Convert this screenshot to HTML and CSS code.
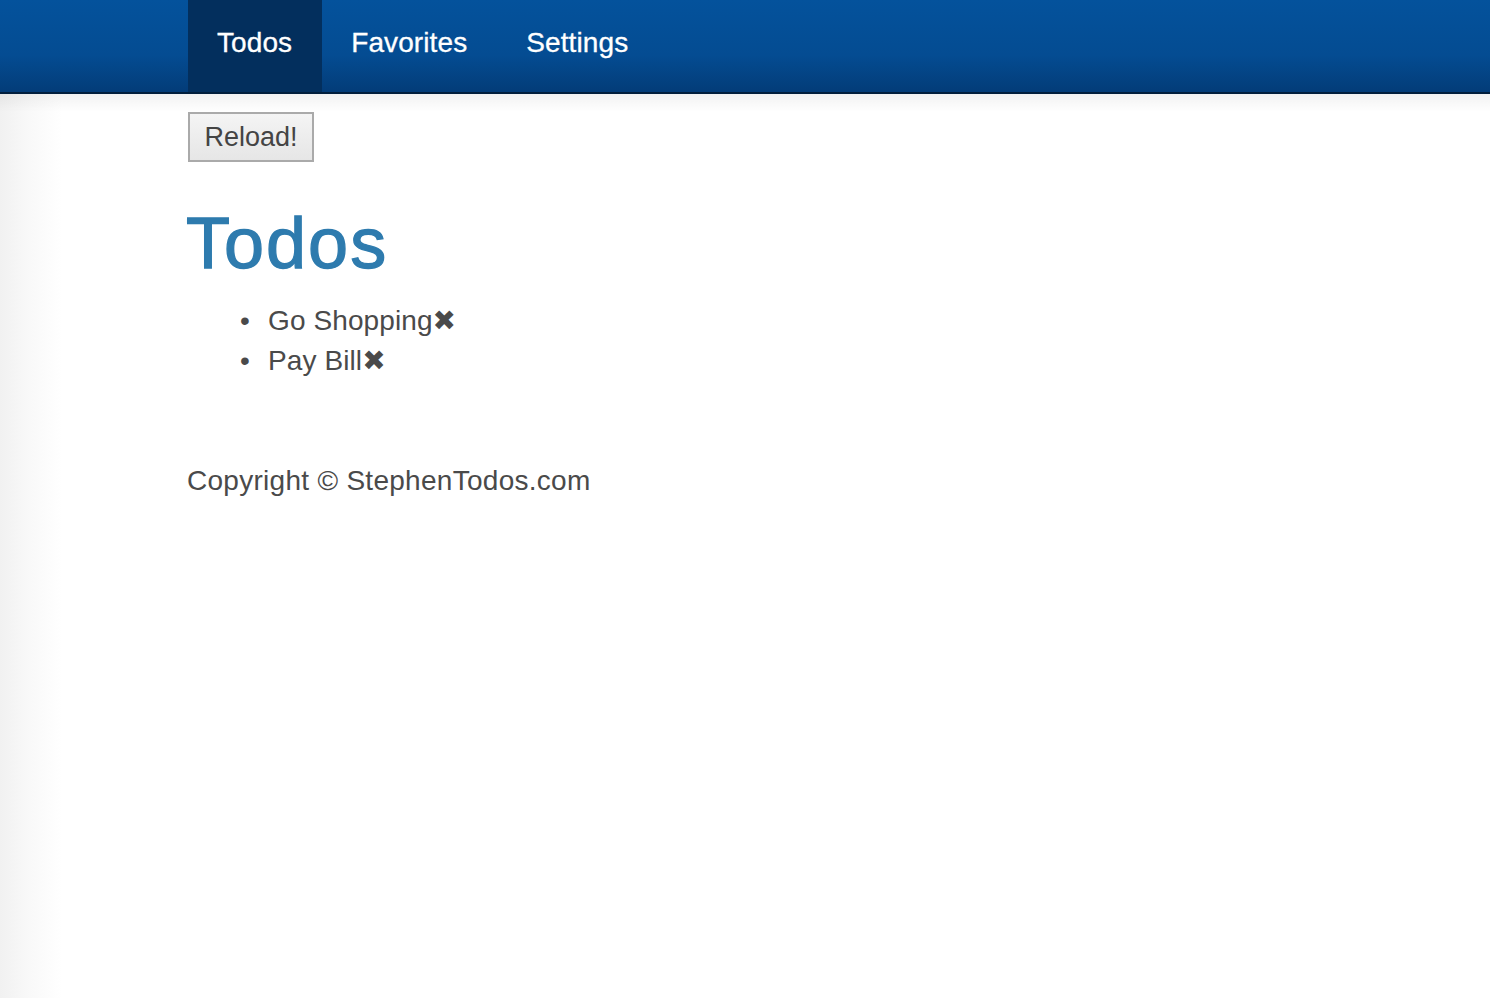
FILE: index.html
```html
<!DOCTYPE html>
<html>
<head>
<meta charset="utf-8">
<link rel="stylesheet" href="styles.css">
</head>
<body>
<header class="navbar">
  <nav class="nav-inner">
    <a class="nav-item active">Todos</a>
    <a class="nav-item">Favorites</a>
    <a class="nav-item">Settings</a>
  </nav>
</header>
<main class="page">
  <div class="container">
    <button class="reload">Reload!</button>
    <h1 class="title">Todos</h1>
    <ul class="todo-list">
      <li>Go Shopping<span class="del">✖</span></li>
      <li>Pay Bill<span class="del">✖</span></li>
    </ul>
    <footer class="footer">Copyright © StephenTodos.com</footer>
  </div>
</main>
</body>
</html>
```
FILE: styles.css
```css
html, body {
  margin: 0;
  padding: 0;
  height: 100%;
}
body {
  font-family: "Liberation Sans", Arial, sans-serif;
  color: #4a4a4a;
  background: #fff;
  display: flex;
  flex-direction: column;
}
.navbar {
  height: 92px;
  background: linear-gradient(to bottom, #04529c 0%, #044c92 60%, #033c78 100%);
  border-bottom: 2px solid #021f3d;
  flex: none;
}
.nav-inner {
  display: flex;
  height: 100%;
  margin-left: 188px;
}
.nav-item {
  display: flex;
  align-items: center;
  padding: 0 30px 6px 29px;
  color: #fff;
  font-size: 28px;
  letter-spacing: 0.1px;
  text-decoration: none;
  -webkit-text-stroke: 0.3px #fff;
}
.nav-item.active {
  background: #032f5d;
}
.page {
  flex: 1;
  background:
    linear-gradient(to bottom, rgba(0,0,0,0.05), rgba(0,0,0,0) 18px),
    linear-gradient(to right, #f1f1f1 0px, #f9f9f9 30px, #ffffff 62px);
}
.container {
  margin-left: 188px;
  padding-top: 18px;
}
.reload {
  display: block;
  width: 126px;
  height: 50px;
  margin: 0;
  padding: 0;
  border: 2px solid #aaaaaa;
  background: linear-gradient(to bottom, #f4f4f4, #e6e6e6);
  font-family: "Liberation Sans", Arial, sans-serif;
  font-size: 27px;
  color: #444;
}
.title {
  margin: 42px 0 18px -2px;
  font-size: 72px;
  line-height: 79px;
  font-weight: normal;
  letter-spacing: 2px;
  color: #2e7bae;
  -webkit-text-stroke: 1.3px #2e7bae;
}
.todo-list {
  margin: 0;
  padding-left: 80px;
  font-size: 28px;
  line-height: 40px;
  letter-spacing: 0.1px;
}
.todo-list li::marker {
  content: "•\00a0\00a0\200A";
}
.del {
  font-family: "DejaVu Sans", sans-serif;
  font-size: 28px;
  line-height: 0;
  color: #4a4a4a;
  letter-spacing: 0;
}
.footer {
  margin-top: 80px;
  font-size: 28px;
  line-height: 40px;
  letter-spacing: 0.28px;
  margin-left: -1px;
}
```
